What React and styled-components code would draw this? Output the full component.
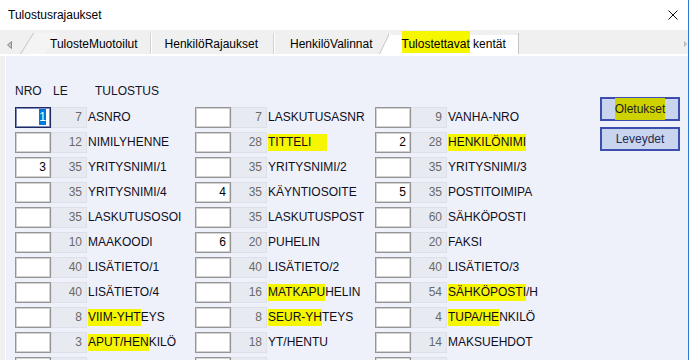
import React from 'react';
import styled, { createGlobalStyle } from 'styled-components';

const GlobalStyle = createGlobalStyle`
    html, body {
        margin: 0;
        padding: 0;
        background: #fff;
    }
    body {
        font-family: "Liberation Sans", Arial, sans-serif;
    }
`;

const rivit = [
    [['1', 7, 'ASNRO', null, true], ['', 7, 'LASKUTUSASNR'], ['', 9, 'VANHA-NRO']],
    [['', 12, 'NIMILYHENNE'], ['', 28, 'TITTELI', { merkki: 'TITTELI', lisa: 16 }], ['2', 28, 'HENKILÖNIMI', { merkki: 'HENKILÖNIMI' }]],
    [['3', 35, 'YRITYSNIMI/1'], ['', 35, 'YRITYSNIMI/2'], ['', 35, 'YRITYSNIMI/3']],
    [['', 35, 'YRITYSNIMI/4'], ['4', 35, 'KÄYNTIOSOITE'], ['5', 35, 'POSTITOIMIPA']],
    [['', 35, 'LASKUTUSOSOI'], ['', 35, 'LASKUTUSPOST'], ['', 60, 'SÄHKÖPOSTI']],
    [['', 10, 'MAAKOODI'], ['6', 20, 'PUHELIN'], ['', 20, 'FAKSI']],
    [['', 40, 'LISÄTIETO/1'], ['', 40, 'LISÄTIETO/2'], ['', 40, 'LISÄTIETO/3']],
    [['', 40, 'LISÄTIETO/4'], ['', 16, 'MATKAPUHELIN', { merkki: 'MATKAPU' }], ['', 54, 'SÄHKÖPOSTI/H', { merkki: 'SÄHKÖPOSTI' }]],
    [['', 8, 'VIIM-YHTEYS', { merkki: 'VIIM-YHT' }], ['', 8, 'SEUR-YHTEYS', { merkki: 'SEUR-YH' }], ['', 4, 'TUPA/HENKILÖ', { merkki: 'TUPA/HE' }]],
    [['', 3, 'APUT/HENKILÖ', { merkki: 'APUT/HEN' }], ['', 18, 'YT/HENTU'], ['', 14, 'MAKSUEHDOT']],
    [['', '', ''], ['', '', ''], ['', '', '']],
];

const Nimike = ({ teksti, korostus }) => {
    if (!korostus) return <Nimi>{teksti}</Nimi>;
    const loppu = teksti.slice(korostus.merkki.length);
    return (
        <Nimi>
            <Korostus $lisa={korostus.lisa}>{korostus.merkki}</Korostus>
            {loppu}
        </Nimi>
    );
};

const App = () => {
    return (
        <>
            <GlobalStyle />
            <Ikkuna>
                <Otsikko>
                    <span>Tulostusrajaukset</span>
                    <svg width="10" height="10" viewBox="0 0 10 10">
                        <path d="M0.5 0.5 L9.5 9.5 M9.5 0.5 L0.5 9.5" stroke="#111" strokeWidth="1" fill="none" />
                    </svg>
                </Otsikko>
                <Valilehdet>
                    <Nuoli>
                        <svg width="5" height="8" viewBox="0 0 5 8">
                            <polygon points="4.5,0.5 0.5,4 4.5,7.5" fill="#c4c4c4" stroke="#8c8c8c" strokeWidth="1" />
                        </svg>
                    </Nuoli>
                    <Valilehti $vino $vasen={30} $oikea={12}>TulosteMuotoilut</Valilehti>
                    <Valilehti $vasen={14} $oikea={15}>HenkilöRajaukset</Valilehti>
                    <Valilehti $vasen={16} $oikea={15}>HenkilöValinnat</Valilehti>
                    <Valilehti $aktiivinen $vasen={13} $oikea={12}>
                        <Korostus $yla={6} $ala={2}>Tulostettavat</Korostus> kentät
                    </Valilehti>
                    <Nuoli $oikealla>
                        <svg width="5" height="8" viewBox="0 0 5 8">
                            <polygon points="0.5,0.5 4.5,4 0.5,7.5" fill="#e6e6e6" stroke="#8c8c8c" strokeWidth="1" />
                        </svg>
                    </Nuoli>
                </Valilehdet>
                <Paneeli>
                    <Kentat>
                        <Otsakkeet>
                            <Otsake $leveys={38}>NRO</Otsake>
                            <Otsake $leveys={42}>LE</Otsake>
                            <Otsake>TULOSTUS</Otsake>
                        </Otsakkeet>
                        <Ruudukko>
                            {rivit.map((rivi, i) =>
                                rivi.map(([nro, le, nimi, korostus, valittu], j) => (
                                    <Solu key={`${i}-${j}`}>
                                        <NroLaatikko $valittu={valittu}>
                                            {valittu ? <Valinta>{nro}</Valinta> : nro}
                                        </NroLaatikko>
                                        <LeLaatikko>{le}</LeLaatikko>
                                        <Nimike teksti={nimi} korostus={korostus} />
                                    </Solu>
                                ))
                            )}
                        </Ruudukko>
                    </Kentat>
                    <Sivu>
                        <Painike>
                            <Korostus $vari="#cdd200" $yla={4} $ala={4}>Oletukset</Korostus>
                        </Painike>
                        <Painike $tumma>Leveydet</Painike>
                    </Sivu>
                </Paneeli>
            </Ikkuna>
        </>
    );
}

const Ikkuna = styled.div`
    width: 688px;
    height: 360px;
    overflow: hidden;
    border-right: 1px solid #2b7ad0;
    display: flex;
    flex-direction: column;
    background: #f0f0f0;
    font-size: 12px;
    color: #000;
`;

const Otsikko = styled.div`
    height: 30px;
    flex: none;
    background: #fff;
    display: flex;
    align-items: center;
    justify-content: space-between;
    padding: 0 10px 0 8px;
    font-size: 12px;
`;

const Valilehdet = styled.div`
    height: 24px;
    flex: none;
    display: flex;
    align-items: flex-end;
    padding-left: 4px;
    border-bottom: 2px solid #fff;
    background: #f0f0f0;
`;

const Nuoli = styled.div`
    width: ${props => props.$oikealla ? '6px' : '16px'};
    height: 21px;
    display: flex;
    align-items: center;
    padding-left: 3px;
    box-sizing: border-box;
    margin-left: ${props => props.$oikealla ? 'auto' : '0'};
    margin-right: ${props => props.$oikealla ? '1px' : '0'};
    padding-top: ${props => props.$oikealla ? '0' : '2px'};
`;

const Valilehti = styled.div`
    position: relative;
    z-index: ${props => props.$aktiivinen ? 2 : 1};
    height: 21px;
    line-height: 21px;
    padding: 1px ${props => props.$oikea}px 0 ${props => props.$vasen}px;
    box-sizing: border-box;
    white-space: nowrap;
    color: #000;
    background: ${props => props.$aktiivinen
        ? 'linear-gradient(to bottom, transparent 2px, #fff 2px)'
        : 'transparent'};
    border-right: 1px solid ${props => props.$aktiivinen ? '#c6c6c6' : '#d2d2d2'};
    box-shadow: ${props => props.$aktiivinen ? 'none' : '1px 0 0 #fff'};

    ${props => (props.$aktiivinen || props.$vino) && `
        &::before {
            content: '';
            position: absolute;
            z-index: -1;
            left: ${props.$aktiivinen ? '-10px' : '0'};
            top: ${props.$aktiivinen ? '2px' : '0'};
            bottom: 0;
            width: 24px;
            background: ${props.$aktiivinen ? '#fff' : '#f4f4f4'};
            border-left: 1px solid #c2c2c2;
            transform-origin: bottom left;
            transform: skewX(-${props.$aktiivinen ? 26 : 32}deg);
        }
    `}
`;

const Korostus = styled.span`
    background: ${props => props.$vari || '#f6f600'};
    padding: ${props => props.$yla ?? 1}px ${props => props.$lisa || 0}px ${props => props.$ala ?? 2}px 0;
`;

const Paneeli = styled.div`
    flex: 1;
    margin-left: 5px;
    background: #eef1f9;
    border-left: 1px solid #fff;
    display: flex;
    padding: 28px 0 0 9px;
`;

const Kentat = styled.div`
    width: 540px;
    flex: none;
`;

const Otsakkeet = styled.div`
    display: flex;
    height: 14px;
    line-height: 14px;
    margin-bottom: 9px;
    color: #14142a;
`;

const Otsake = styled.span`
    width: ${props => props.$leveys ? `${props.$leveys}px` : 'auto'};
    flex: none;
`;

const Ruudukko = styled.div`
    display: grid;
    grid-template-columns: repeat(3, 180px);
    grid-auto-rows: 21px;
    row-gap: 4px;
`;

const Solu = styled.div`
    display: flex;
    height: 21px;
`;

const NroLaatikko = styled.div`
    width: 36px;
    flex: none;
    box-sizing: border-box;
    background: #fff;
    border: 1px solid ${props => props.$valittu ? '#1d2a66' : '#959595'};
    box-shadow: inset 0 0 0 1px ${props => props.$valittu ? '#7f8ab8' : '#d2d2d2'};
    text-align: right;
    padding-right: 4px;
    line-height: 19px;
    color: #000;
`;

const Valinta = styled.span`
    background: #0078d7;
    color: #fff;
    padding: 1px 0;
`;

const LeLaatikko = styled.div`
    width: 36px;
    flex: none;
    box-sizing: border-box;
    background: #e7eaf1;
    border: 1px solid #dde0e8;
    text-align: right;
    padding-right: 4px;
    line-height: 19px;
    color: #6a6a6a;
`;

const Nimi = styled.div`
    padding-left: 1px;
    line-height: 21px;
    white-space: nowrap;
    color: #0e0e1c;
`;

const Sivu = styled.div`
    margin: 13px 0 0 45px;
    display: flex;
    flex-direction: column;
    gap: 6px;
`;

const Painike = styled.button`
    width: 80px;
    height: 24px;
    box-sizing: border-box;
    border: 2px solid #3d4fae;
    background: #c9d4ef;
    font-family: "Liberation Sans", Arial, sans-serif;
    font-size: 12px;
    color: ${props => props.$tumma ? '#262b52' : '#1e1e1e'};
    padding: 0;
    cursor: default;
`;

export default App;
